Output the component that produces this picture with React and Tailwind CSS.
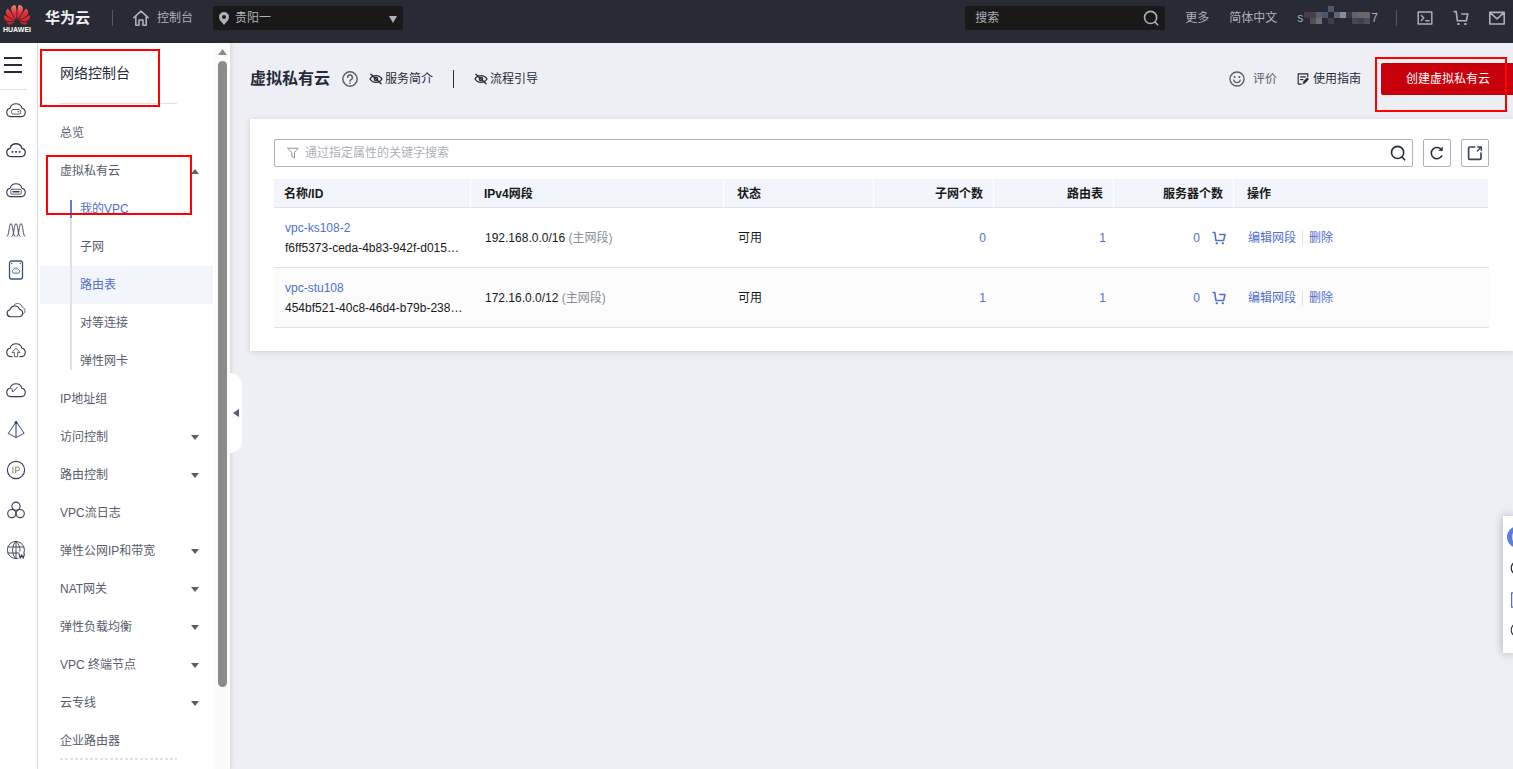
import { SiHuawei } from "react-icons/si";

function Line({ children, className = "", width = 1.4, box = 20 }) {
  return (
    <svg
      viewBox={`0 0 ${box} ${box}`}
      className={`shrink-0 ${className}`}
      fill="none"
      stroke="currentColor"
      strokeWidth={width}
      strokeLinecap="round"
      strokeLinejoin="round"
      aria-hidden="true"
    >
      {children}
    </svg>
  );
}

const CLOUD = "M4.7 16.6a4.200 4.200 0 0 1-.6-8.300 6.100 6.100 0 0 1 11.800 0 4.200 4.200 0 0 1-.6 8.300z";

const railIcons = [
  { label: "弹性云服务器", art: <><path d={CLOUD} /><rect x="5.500" y="9.500" width="9.200" height="4.600" rx="1.800" strokeWidth=".8" /><path d="M12 11.800h.8" /></> },
  { label: "云容器", art: <><path d={CLOUD} strokeWidth="1.300" /><path d="M6.200 11.800h.5M9.800 11.800h.5M13.400 11.800h.5" strokeWidth="1.700" /></> },
  { label: "裸金属服务器", art: <><path d={CLOUD} /><rect x="4.800" y="9.300" width="10.400" height="4.900" rx="1.200" strokeWidth=".8" /><path d="M7 11.800h6" strokeWidth="1.400" /></> },
  { label: "弹性伸缩", art: <path d="M1 16.500C3.200 16.500 3 3.500 5 3.500s1.800 13 4 13M6 16.500c2.200 0 2-13 4-13s1.800 13 4 13M11 16.500c2.200 0 2-13 4-13s1.800 13 4 13" strokeWidth=".9" /> },
  { label: "镜像服务", art: <><rect x="3.500" y="1" width="13" height="18" rx="2" stroke="#35548c" strokeWidth="1.300" /><path d="M7.300 13a1.700 1.700 0 0 1 0-3.100 2.900 2.900 0 0 1 5.400 0 1.700 1.700 0 0 1 0 3.100z" strokeWidth=".8" /><path d="M5.500 3.200h.3M14.200 3.200h.3" /></> },
  { label: "对象存储", art: <><path d="M4.300 16.800a3.600 3.600 0 0 1-.3-7.100 5 5 0 0 1 9.500-.4 3.800 3.800 0 0 1-.1 7.500z" /><path d="M7.800 5.200a4.900 4.900 0 0 1 8.600 2.100 3.500 3.500 0 0 1 .3 6.700" strokeWidth=".7" /></> },
  { label: "云备份", art: <><path d="M6 16.600H4.700a4.200 4.200 0 0 1-.6-8.300 6.100 6.100 0 0 1 11.800 0 4.200 4.200 0 0 1-.6 8.300H14" /><path d="M8.300 16.400v-4H6L10 8.300l4 4.100h-2.300v4z" strokeWidth=".8" /></> },
  { label: "云监控", art: <><path d={CLOUD} /><path d="M5.800 8.500 6.800 12l4.700-5" strokeWidth=".9" /></> },
  { label: "弹性负载均衡", art: <><path d="M10 2 2.200 13.500 10 17.500l7.800-4z" strokeWidth=".9" /><path d="M10 2v15.500" stroke="#3b6ea8" strokeWidth="1.300" /><circle cx="10" cy="2.600" r=".9" fill="currentColor" /></> },
  { label: "弹性公网IP", art: <><circle cx="10" cy="10" r="8.600" /><path d="M6.900 7v6.200M9.700 13.200V7h2a1.800 1.800 0 0 1 0 3.700h-2" stroke="#8a7a55" strokeWidth=".9" /></> },
  { label: "云联盟", art: <><circle cx="10" cy="6.200" r="4.100" /><circle cx="5.800" cy="13.600" r="4.100" /><circle cx="14.200" cy="13.600" r="4.100" /></> },
  { label: "域名服务", art: <><path d="M17.800 13.500A8.600 8.600 0 1 0 12 18.400M2 7h16M2 13h11M10 1.400v17M10 1.400C5.400 5 5.400 15 10 18.600M10 1.400c3 2.500 4.200 6 3.900 9.800" strokeWidth=".9" /><path d="m13 14 1.200 4.200 1.500-3.500 1.500 3.500 1.300-4.200" /></> },
];

const menu = [
  { text: "IP地址组" },
  { text: "访问控制", more: true },
  { text: "路由控制", more: true },
  { text: "VPC流日志" },
  { text: "弹性公网IP和带宽", more: true },
  { text: "NAT网关", more: true },
  { text: "弹性负载均衡", more: true },
  { text: "VPC 终端节点", more: true },
  { text: "云专线", more: true },
  { text: "企业路由器" },
];

const vpcs = [
  { name: "vpc-ks108-2", id: "f6ff5373-ceda-4b83-942f-d015…", cidr: "192.168.0.0/16", subnets: 0, routes: 1, servers: 0 },
  { name: "vpc-stu108", id: "454bf521-40c8-46d4-b79b-238…", cidr: "172.16.0.0/12", subnets: 1, routes: 1, servers: 0 },
];

function Caret({ className = "" }) {
  return (
    <svg viewBox="0 0 8 5" className={`h-[5px] w-2 shrink-0 ${className}`} fill="currentColor" aria-hidden="true">
      <path d="M0 0h8L4 5z" />
    </svg>
  );
}

function Search({ className }) {
  return (
    <Line className={className} width={2}>
      <circle cx="9.500" cy="9.300" r="7.600" />
      <path d="m15 15 3.300 3.500" />
    </Line>
  );
}

function Cart({ className, width = 1.6 }) {
  return (
    <Line className={className} width={width}>
      <path d="M1.500 2H4l1.500 11.500h11.200L18.500 5H11" />
      <path d="M6.500 17.500h.6M15.200 17.500h.6" strokeWidth="2.800" />
    </Line>
  );
}

function EyeOff() {
  return (
    <Line className="h-3 w-3.5" width={2.2}>
      <path d="M0 10c4.500-7.500 15.500-7.500 20 0-4.500 7.500-15.500 7.500-20 0z" />
      <circle cx="10" cy="10" r="2.800" />
      <path d="m1.500 2 17 16" />
    </Line>
  );
}

const mosaic = [
  [1, 6, "#4b3b3f"], [7, 6, "#44404a"], [13, 6, "#5d5d68"], [19, 6, "#48586f"], [31, 6, "#5b6779"], [37, 6, "#8b8c98"],
  [43, 6, "#3b3744"], [49, 6, "#626069"], [55, 6, "#69666b"], [61, 6, "#6f645f"], [25, 0, "#555862"], [7, 12, "#4e4e53"],
  [13, 12, "#6a6c76"], [25, 12, "#3a3d46"], [49, 12, "#45484d"], [55, 12, "#3e4147"], [61, 12, "#4d505a"],
];

function Header() {
  return (
    <header className="flex h-[43px] shrink-0 items-start bg-[#282b33] text-xs text-[#adb0b8]">
      <a href="#home" className="flex h-9 shrink-0 items-center">
        <span className="ml-[3px] mt-0.5 flex w-7 flex-col items-center">
          <SiHuawei viewBox="0 3.500 24 17.200" fill="url(#petal)" className="h-5 w-[26px]" aria-hidden="true" />
          <span className="text-[7px] font-bold leading-[9px] text-white">HUAWEI</span>
        </span>
        <span className="ml-3.5 text-[15px] font-bold text-[#f0f0f2]">华为云</span>
      </a>
      <svg className="absolute h-0 w-0" aria-hidden="true">
        <linearGradient id="petal" x1="0" y1="0" x2="0" y2="1">
          <stop offset="0" stopColor="#f58a78" />
          <stop offset=".4" stopColor="#e5303a" />
          <stop offset="1" stopColor="#cf1c24" />
        </linearGradient>
      </svg>
      <span className="ml-[22px] mt-2.5 h-4 w-px bg-[#565962]" />
      <a href="#console" className="ml-5 flex h-9 shrink-0 items-center gap-2">
        <Line className="h-4 w-4" width={2}>
          <path d="M1 9.500 10 1.500l9 8M3.500 8v11h4v-6.500h5V19h4V8" />
        </Line>
        控制台
      </a>
      <div className="relative ml-5 mt-1.5 w-[190px]">
        <select aria-label="区域" className="h-6 w-full appearance-none rounded-xs bg-[#191919] pl-[22px] text-xs text-[#adb0b8]">
          <option>贵阳一</option>
        </select>
        <svg viewBox="0 0 10 13" className="pointer-events-none absolute left-1.5 top-1.5 h-[13px] w-2.5" fill="currentColor" aria-hidden="true">
          <path fillRule="evenodd" d="M5 0a5 5 0 0 1 5 5c0 3-3 5.500-5 8C3 10.500 0 8 0 5a5 5 0 0 1 5-5zm0 3a2 2 0 1 0 0 4 2 2 0 0 0 0-4z" />
        </svg>
        <svg viewBox="0 0 8 7" className="pointer-events-none absolute right-1.5 top-2.5 h-[7px] w-2" fill="currentColor" aria-hidden="true">
          <path d="M0 0h8L4 7z" />
        </svg>
      </div>
      <div className="ml-auto mt-1.5 flex h-6 w-[200px] items-center rounded-xs bg-[#191919] pl-2 pr-1.5">
        <input aria-label="搜索" placeholder="搜索" className="min-w-0 flex-1 bg-transparent pl-0.5 text-xs placeholder:text-[#adb0b8]" />
        <button aria-label="开始搜索"><Search className="h-4 w-4" /></button>
      </div>
      <nav className="flex h-9 shrink-0 items-center pr-2 pl-5">
        <a href="#more">更多</a>
        <button className="ml-5">简体中文</button>
        <button className="ml-5 flex items-center" aria-label="账号">
          <span>s</span>
          <svg viewBox="0 0 68 24" className="h-6 w-[68px]" aria-hidden="true">
            {mosaic.map(([x, y, c]) => <rect key={`${x}-${y}`} x={x} y={y} width="6" height="6" fill={c} />)}
          </svg>
          <span>7</span>
        </button>
        <span className="ml-[18px] h-4 w-px bg-[#565962]" />
        <button className="ml-5" aria-label="命令行">
          <Line className="h-4 w-4" width={1.8}>
            <rect x="1.500" y="2.500" width="17" height="15" />
            <path d="m5.500 7 3 3-3 3M11 13.500h4" />
          </Line>
        </button>
        <button className="ml-5" aria-label="购物车"><Cart className="h-4 w-4" width={2} /></button>
        <button className="ml-5" aria-label="消息">
          <Line className="h-4 w-4" width={2}>
            <path d="M1 3h18v14.500H1zM2 4l8 7 8-7" />
          </Line>
        </button>
      </nav>
    </header>
  );
}

function Rail() {
  return (
    <nav aria-label="服务" className="flex w-[38px] shrink-0 flex-col border-r border-[#dfe1e6] bg-white text-[#343b4c]">
      <div className="flex h-[47px] w-[27px] shrink-0 border-b border-[#dfe1e6] pl-1 pt-3.5">
        <button aria-label="展开菜单" className="flex h-4 w-[18px] flex-col justify-between">
          <span className="h-0.5 w-full bg-[#252b3a]" />
          <span className="h-0.5 w-full bg-[#252b3a]" />
          <span className="h-0.5 w-full bg-[#252b3a]" />
        </button>
      </div>
      {railIcons.map((r) => (
        <a key={r.label} href="#service" aria-label={r.label} className="flex h-10 w-8 shrink-0 items-center justify-center">
          <Line className="h-5 w-5" width={1.1}>{r.art}</Line>
        </a>
      ))}
    </nav>
  );
}

function SubItem({ children, state = "" }) {
  return (
    <li>
      <a
        href="#sub"
        className={`flex h-[38px] items-center pl-10 ${state === "on" ? "bg-[#f2f5fc]" : ""} ${state ? "text-[#526ecc]" : ""}`}
      >
        {children}
      </a>
    </li>
  );
}

function Sidebar() {
  return (
    <aside className="relative flex w-48 shrink-0 bg-white text-xs text-[#575d6c] shadow-[1px_0_4px_rgba(0,0,0,0.12)]">
      <div className="min-w-0 flex-1 overflow-hidden pl-0.5 pr-0.5">
        <h2 className="ml-5 mr-9 flex h-[61px] items-center border-b border-[#dfe1e6] text-sm text-[#252b3a]">网络控制台</h2>
        <ul className="pt-2.5">
          <li><a href="#overview" className="flex h-[38px] items-center pl-5">总览</a></li>
          <li>
            <button className="flex h-[38px] w-full items-center justify-between pl-5 pr-3.5">
              虚拟私有云
              <Caret className="rotate-180" />
            </button>
            <ul className="relative">
              <SubItem state="current">我的VPC</SubItem>
              <SubItem>子网</SubItem>
              <SubItem state="on">路由表</SubItem>
              <SubItem>对等连接</SubItem>
              <SubItem>弹性网卡</SubItem>
              <li aria-hidden="true" className="absolute bottom-2.5 left-[30px] top-2.5 w-0.5 bg-[#dfe1e6]">
                <div className="h-[18px] bg-[#5e7ce0]" />
              </li>
            </ul>
          </li>
          {menu.map((m) => (
            <li key={m.text}>
              <a href="#item" className="flex h-[38px] items-center justify-between pl-5 pr-3.5">
                {m.text}
                {m.more && <Caret />}
              </a>
            </li>
          ))}
        </ul>
        <div className="-mt-0.5 ml-5 mr-9 h-0.5 bg-[repeating-linear-gradient(90deg,#dfe1e6_0_3px,transparent_3px_5px)]" />
      </div>
      <div className="flex w-[15px] flex-col items-center bg-[#fbfbfb] pt-1.5" aria-hidden="true">
        <svg viewBox="0 0 9 6" className="h-1.5 w-[9px] fill-[#8b8b8b]"><path d="M4.500 0 9 6H0z" /></svg>
        <div className="mt-1.5 h-[87%] w-[9px] rounded-full bg-[#8b8b8b]" />
      </div>
      <button aria-label="收起导航" className="absolute left-full top-[330px] flex h-20 w-3 items-center justify-center rounded-r-xl bg-white">
        <svg viewBox="0 0 6 8" className="h-2 w-1.5" fill="currentColor" aria-hidden="true"><path d="M6 0v8L0 4z" /></svg>
      </button>
      <div className="pointer-events-none absolute left-0.5 top-1.5 h-[58px] w-[120px] border-2 border-[#f00]" />
      <div className="pointer-events-none absolute left-2 top-28 h-[60px] w-[146px] border-2 border-[#f00]" />
    </aside>
  );
}

function TitleBar() {
  return (
    <div className="flex h-[76px] items-center pb-1 text-xs text-[#252b3a]">
      <h1 className="text-base font-bold">虚拟私有云</h1>
      <div className="ml-3 flex items-center">
        <button aria-label="帮助" className="text-[#575d6c]">
          <Line className="h-4 w-4" width={1.8}>
            <circle cx="10" cy="10" r="9" />
            <path d="M7 8a3 3 0 1 1 4.300 2.700c-.9.500-1.300.9-1.300 1.800M10 15v.2" />
          </Line>
        </button>
        <a href="#intro" className="ml-[11px] flex items-center gap-0.5"><EyeOff />服务简介</a>
        <span className="mx-5 h-[18px] w-px bg-[#252b3a]" />
        <a href="#guide" className="flex items-center gap-0.5"><EyeOff />流程引导</a>
      </div>
      <div className="ml-auto flex items-center">
        <button className="flex items-center gap-2 text-[#575d6c]">
          <Line className="h-4 w-4" width={1.7}>
            <circle cx="10" cy="10" r="8.800" />
            <path d="M6 11.500c1 4 7 4 8 0" />
            <path d="M7 7.200v.6M13 7.200v.6" strokeWidth="2.200" />
          </Line>
          评价
        </button>
        <a href="#manual" className="ml-5 flex items-center gap-1">
          <Line className="h-3 w-3" width={2}>
            <path d="M18 6V1.500H2v17h5M6 6.500h8M6 11h4" />
            <path d="m10 18 1-4 6-6 2.500 2.500-6 6z" fill="currentColor" strokeWidth="1" />
          </Line>
          使用指南
        </a>
        <div className="relative ml-5">
          <button className="h-8 rounded-l-xs bg-[#c7000b] pl-[25px] pr-[23px] text-white">创建虚拟私有云</button>
          <div className="pointer-events-none absolute -left-1.5 -top-1.5 h-[55px] w-[132px] border-2 border-[#f00]" />
        </div>
      </div>
    </div>
  );
}

function Th({ children, first, right }) {
  return (
    <th
      scope="col"
      className={`border-r border-r-white pt-0.5 font-bold ${right ? "pr-2.5 text-right" : "text-left"} ${first ? "pl-2.5" : "pl-[13px]"}`}
    >
      {children}
    </th>
  );
}

function VpcTable() {
  return (
    <table className="mt-3 w-full table-fixed border-separate border-spacing-0 text-xs text-[#191919]">
      <colgroup>
        <col className="w-[197px]" />
        <col className="w-[253px]" />
        <col className="w-[150px]" />
        <col className="w-[120px]" />
        <col className="w-[120px]" />
        <col className="w-[120px]" />
        <col />
      </colgroup>
      <thead>
        <tr className="h-[29px] bg-[#f2f5fc] *:border-b *:border-b-[#dfe1e6]">
          <Th first>名称/ID</Th>
          <Th>IPv4网段</Th>
          <Th>状态</Th>
          <Th right>子网个数</Th>
          <Th right>路由表</Th>
          <Th right>服务器个数</Th>
          <Th>操作</Th>
        </tr>
      </thead>
      <tbody>
        {vpcs.map((v) => (
          <tr key={v.name} className="h-[60px] even:bg-[#fcfcfc] *:border-b *:border-[#dfe1ee]">
            <td className="whitespace-nowrap pl-[11px] leading-5">
              <a href="#vpc" className="block text-[#526ecc]">{v.name}</a>
              <span className="block">{v.id}</span>
            </td>
            <td className="pl-3.5">{v.cidr} <span className="text-[#8a8e99]">(主网段)</span></td>
            <td className="pl-3.5">可用</td>
            <td className="pr-2 text-right"><a href="#subnets" className="text-[#526ecc]">{v.subnets}</a></td>
            <td className="pr-2 text-right"><a href="#routes" className="text-[#526ecc]">{v.routes}</a></td>
            <td className="pr-2">
              <span className="flex items-center justify-end gap-3 text-[#526ecc]">
                <a href="#servers">{v.servers}</a>
                <button aria-label="购买服务器"><Cart className="h-3.5 w-3.5" width={2.2} /></button>
              </span>
            </td>
            <td className="pl-3.5">
              <span className="flex items-center text-[#526ecc]">
                <button>编辑网段</button>
                <span className="mx-1.5 h-3.5 w-px bg-[#dfe1e6]" />
                <button>删除</button>
              </span>
            </td>
          </tr>
        ))}
      </tbody>
    </table>
  );
}

function Dock() {
  return (
    <aside aria-label="快捷工具" className="fixed right-0 top-[516px] h-[137px] w-2.5 shadow-[0_0_10px_rgba(0,0,0,0.3)]">
      <div className="h-full overflow-hidden bg-white">
        <div className="flex w-10 flex-col items-start pt-2.5 text-[#252b3a]">
          <button aria-label="智能助手" className="ml-1 flex h-[22px] w-[22px] items-center justify-center rounded-full bg-[#5e7ce0]">
            <span className="h-2.5 w-3 rounded-sm bg-[#c9d4f8]" />
          </button>
          <button aria-label="客服" className="ml-[7px] mt-3">
            <Line className="h-4 w-4" width={1.6}><circle cx="10" cy="10" r="8.500" /></Line>
          </button>
          <button aria-label="文档" className="ml-[7px] mt-4 text-[#526ecc]">
            <Line className="h-4 w-4" width={1.6}><rect x="2" y="1" width="16" height="18" /></Line>
          </button>
          <button aria-label="反馈" className="ml-[7px] mt-3.5">
            <Line className="h-4 w-4" width={1.4}><circle cx="10" cy="10" r="8.500" /></Line>
          </button>
        </div>
      </div>
    </aside>
  );
}

export default function App() {
  return (
    <div className="flex h-screen flex-col overflow-hidden bg-[#eeeff5] font-['Liberation_Sans','Noto_Sans_CJK_SC',sans-serif]">
      <Header />
      <div className="flex min-h-0 flex-1">
        <Rail />
        <Sidebar />
        <main className="min-w-0 flex-1 pl-5">
          <TitleBar />
          <section className="bg-white px-6 pb-[23px] pt-5 shadow-[0_1px_6px_rgba(0,0,0,0.14)]">
            <div className="flex items-center gap-2.5">
              <div className="flex h-7 flex-1 items-center rounded-xs border border-[#adb0b8] pl-3 pr-1.5">
                <Line className="h-3 w-3 text-[#8a8e99]" width={1.6}>
                  <path d="M1.500 2h17L12.500 9.500V18l-4.500-2V9.500z" />
                </Line>
                <input aria-label="筛选" placeholder="通过指定属性的关键字搜索" className="ml-1.5 min-w-0 flex-1 text-xs placeholder:text-[#adb0b8]" />
                <button aria-label="搜索" className="text-[#252b3a]"><Search className="h-4 w-4" /></button>
              </div>
              <button aria-label="刷新" className="flex h-7 w-7 items-center justify-center rounded-xs border border-[#adb0b8] text-[#252b3a]">
                <Line className="h-4 w-4" width={1.9}>
                  <path d="M16 13.500A7 7 0 1 1 15.500 6" />
                  <path d="M16.800 3v4h-4z" fill="currentColor" strokeWidth=".8" />
                </Line>
              </button>
              <button aria-label="导出" className="flex h-7 w-7 items-center justify-center rounded-xs border border-[#adb0b8] text-[#3d4454]">
                <Line className="h-4 w-4" width={2.1}>
                  <path d="M9.500 2.500h-6a1.500 1.500 0 0 0-1.500 1.500v12.500A1.500 1.500 0 0 0 3.500 18h12.500a1.500 1.500 0 0 0 1.500-1.500V10" />
                  <path d="M13 7.500 17 3.500M13.500 2.500h4.500V7" strokeWidth="1.800" />
                </Line>
              </button>
            </div>
            <VpcTable />
          </section>
        </main>
      </div>
      <Dock />
    </div>
  );
}
